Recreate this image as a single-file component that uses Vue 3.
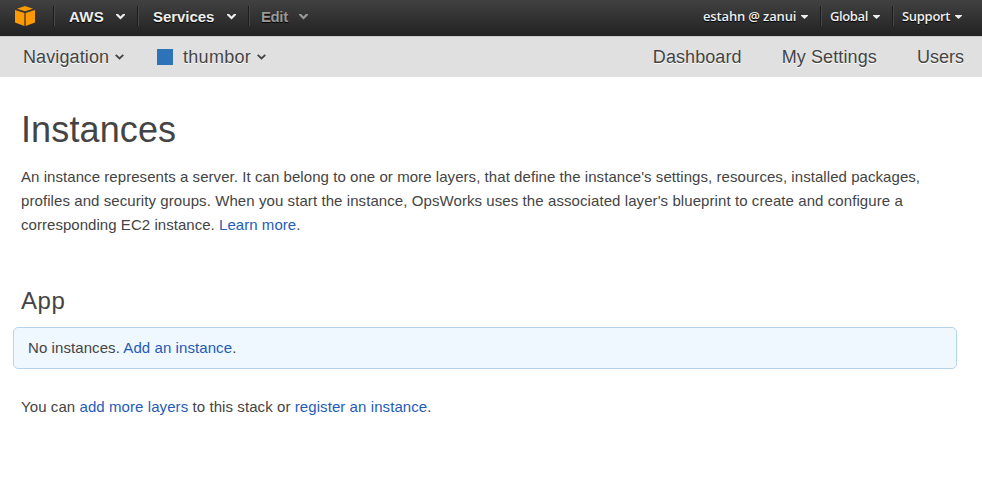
<script setup>
const leftMenus = [
  { label: 'AWS', cls: 'aws' },
  { label: 'Services', cls: 'services' },
  { label: 'Edit', cls: 'edit' },
]
const rightMenus = [
  { label: 'estahn @ zanui', cls: 'account' },
  { label: 'Global', cls: 'region' },
  { label: 'Support', cls: 'support' },
]
</script>

<template>
  <div class="page">
    <header class="topbar">
      <div class="logo">
        <svg width="20" height="20" viewBox="0 0 20 20">
          <path d="M2 2.7 10 0l8 2.7-8 2.6z" fill="#ff9900" />
          <path d="M0 4 9.4 6.9V20L0 16.6z" fill="#ff9900" />
          <path d="M20 4 10.6 6.9V20L20 16.6z" fill="#ff9900" />
        </svg>
      </div>
      <nav class="menus">
        <div v-for="m in leftMenus" :key="m.label" class="menu" :class="m.cls">
          <span class="label">{{ m.label }}</span>
          <svg class="chevron" width="9" height="6" viewBox="0 0 9 6">
            <path d="M0 0h2.1l2.4 2.6L6.9 0H9v1L4.5 5.6 0 1z" fill="currentColor" />
          </svg>
        </div>
      </nav>
      <nav class="menus right">
        <div v-for="m in rightMenus" :key="m.label" class="menu" :class="m.cls">
          <span class="label">{{ m.label }}</span>
          <svg class="caret" width="7" height="4" viewBox="0 0 7 4">
            <path d="M0 0h7v.7L3.5 4 0 .7z" fill="currentColor" />
          </svg>
        </div>
      </nav>
    </header>

    <div class="subnav">
      <a class="nav-link navigation">Navigation</a>
      <svg class="sub-chevron" width="9" height="6" viewBox="0 0 9 6">
        <path d="M.7.8 4.5 4.4 8.3.8" fill="none" stroke="#444" stroke-width="1.8" />
      </svg>
      <span class="stack-color"></span>
      <a class="nav-link stack">thumbor</a>
      <svg class="sub-chevron" width="9" height="6" viewBox="0 0 9 6">
        <path d="M.7.8 4.5 4.4 8.3.8" fill="none" stroke="#444" stroke-width="1.8" />
      </svg>
      <div class="sub-right">
        <a class="nav-link dashboard">Dashboard</a>
        <a class="nav-link settings">My Settings</a>
        <a class="nav-link users">Users</a>
      </div>
    </div>

    <main class="content">
      <h1>Instances</h1>
      <p class="intro">
        <span class="l1">An instance represents a server. It can belong to one or more layers, that define the instance's settings, resources, installed packages,</span><br />
        <span class="l2">profiles and security groups. When you start the instance, OpsWorks uses the associated layer's blueprint to create and configure a</span><br />
        <span class="l3">corresponding EC2 instance. <a>Learn more</a>.</span>
      </p>
      <h2>App</h2>
      <div class="notice">No instances. <a>Add an instance</a>.</div>
      <p class="more">You can <a>add more layers</a> to this stack or <a>register an instance</a>.</p>
    </main>
  </div>
</template>

<style>
body {
  background: #fff;
}
</style>

<style scoped>
.page {
  height: 480px;
  overflow: hidden;
  font-family: "Liberation Sans", Arial, sans-serif;
  color: #444;
}
.topbar {
  display: flex;
  height: 36px;
  box-sizing: border-box;
  background: linear-gradient(#414141, #222);
}
.logo {
  width: 53px;
  padding: 6px 0 0 15px;
  box-sizing: border-box;
}
.logo svg {
  display: block;
}
.menus {
  display: flex;
  height: 20px;
  margin-top: 6px;
}
.menu {
  display: flex;
  align-items: center;
  box-sizing: border-box;
  height: 20px;
  padding-top: 2px;
  border-left: 1px solid #1c1c1c;
  box-shadow: inset 1px 0 #484848;
  color: #eee;
  font-size: 15px;
  font-weight: 700;
  line-height: 20px;
  white-space: nowrap;
  text-shadow: 0 1px 1px #000;
}
.label {
  flex: 1;
}
.menu.aws {
  width: 84px;
  padding-left: 15px;
  padding-right: 12px;
  letter-spacing: 0.3px;
}
.menu.services {
  width: 111px;
  padding-left: 15px;
  padding-right: 12px;
  letter-spacing: -0.05px;
}
.menu.edit {
  width: 65px;
  padding-left: 12px;
  padding-right: 5px;
  letter-spacing: -0.4px;
  color: #999;
}
.right {
  margin-left: auto;
}
.right .menu {
  padding-top: 0;
  font-family: "Open Sans", "Noto Sans", sans-serif;
  font-size: 13px;
  font-weight: 600;
}
.right .caret {
  margin-top: 1px;
}
.right .account {
  width: 117px;
  padding-right: 12px;
  border-left: 0;
  box-shadow: none;
  letter-spacing: -0.15px;
}
.right .region {
  width: 72px;
  padding-left: 9px;
  padding-right: 12px;
  letter-spacing: -0.4px;
}
.right .support {
  width: 90px;
  padding-left: 9px;
  padding-right: 20px;
  letter-spacing: -0.3px;
}
.subnav {
  display: flex;
  align-items: center;
  height: 41px;
  box-sizing: border-box;
  padding: 0 18px 0 23px;
  border-top: 1px solid #ccc;
  background: #e0e0e0;
}
.nav-link {
  font-size: 18px;
  line-height: 20px;
  text-shadow: 0 1px #fff;
  white-space: nowrap;
}
.navigation {
  width: 92px;
  letter-spacing: 0.12px;
}
.stack-color {
  width: 16px;
  height: 16px;
  margin: 0 10px 0 33px;
  background: #2e73b8;
}
.stack {
  width: 74px;
  letter-spacing: 0.3px;
}
.sub-right {
  display: flex;
  gap: 40px;
  margin-left: auto;
}
.dashboard {
  letter-spacing: 0.08px;
}
.settings {
  letter-spacing: 0.12px;
}
.content {
  padding: 31px 25px 0 21px;
}
h1 {
  margin: 0;
  font-size: 36px;
  font-weight: 400;
  line-height: 44px;
  letter-spacing: 0.12px;
}
h2 {
  margin: 49px 0 0;
  font-size: 24px;
  font-weight: 400;
  line-height: 30px;
  letter-spacing: 0.6px;
}
p {
  margin: 0;
  font-size: 15px;
  line-height: 24px;
  white-space: nowrap;
}
.intro {
  margin-top: 13px;
}
.l1 {
  letter-spacing: 0.06px;
}
.l2 {
  letter-spacing: 0.08px;
}
.l3 {
  letter-spacing: 0.045px;
}
a {
  color: inherit;
}
p a,
.notice a {
  color: #1f5bb8;
}
.notice {
  height: 42px;
  box-sizing: border-box;
  margin: 11px 0 0 -8px;
  padding: 0 14px;
  border: 1px solid #b5d5ee;
  border-radius: 5px;
  background: #f0f8ff;
  font-size: 15px;
  line-height: 40px;
  letter-spacing: 0.08px;
}
.more {
  margin-top: 26px;
  letter-spacing: 0.08px;
}
</style>
